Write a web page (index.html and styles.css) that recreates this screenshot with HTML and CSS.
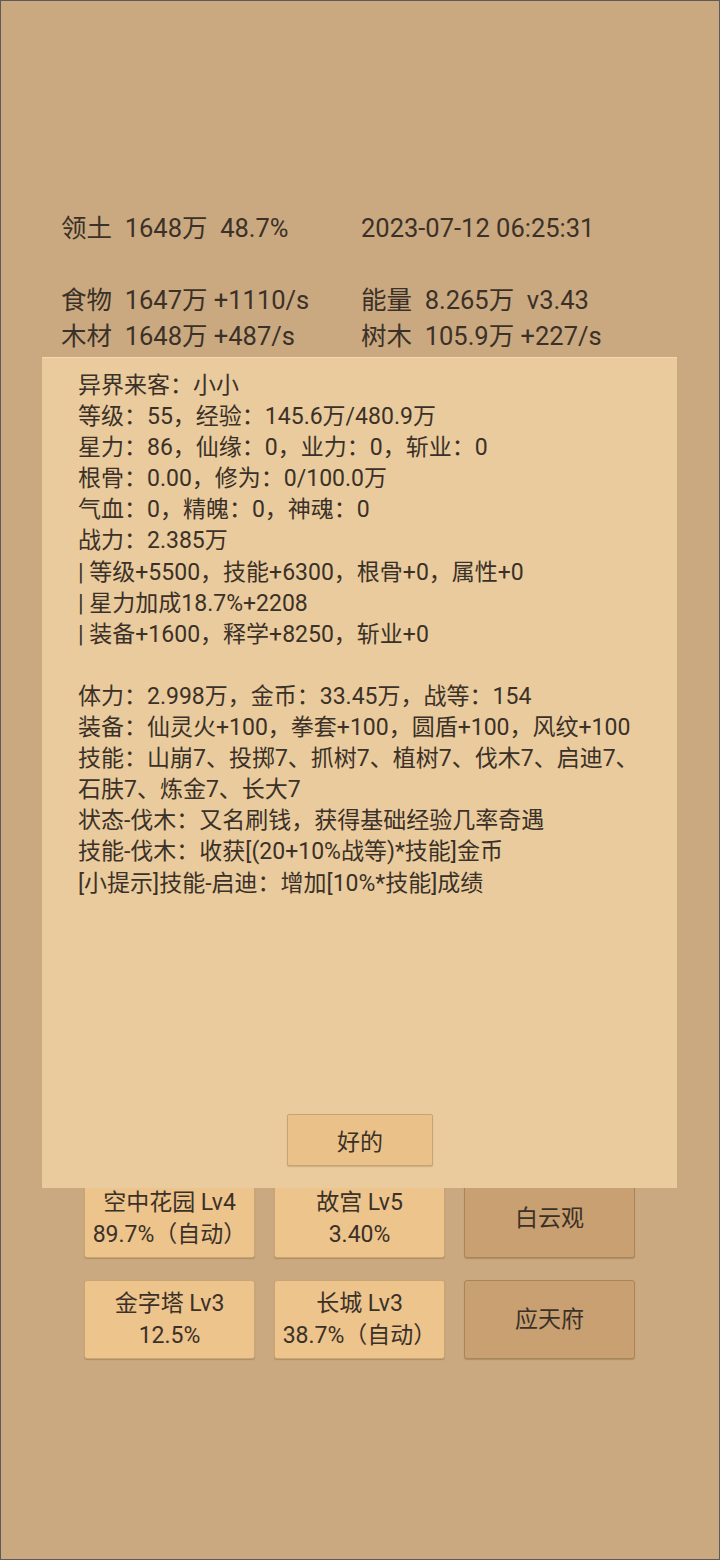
FILE: index.html
```html
<!DOCTYPE html>
<html lang="zh">
<head>
  <meta charset="UTF-8" />
  <meta name="viewport" content="width=device-width, initial-scale=1" />
  <title>领土</title>
  <link rel="stylesheet" href="styles.css">
</head>
<body>
  <div class="screen">
    <div class="stats">
      <div class="col">
        <div>领土  1648万  48.7%</div>
        <div>&nbsp;</div>
        <div>食物  1647万 +1110/s</div>
        <div>木材  1648万 +487/s</div>
      </div>
      <div class="col">
        <div>2023-07-12 06:25:31</div>
        <div>&nbsp;</div>
        <div>能量  8.265万  v3.43</div>
        <div>树木  105.9万 +227/s</div>
      </div>
    </div>

    <div class="buildings">
      <button class="bld">空中花园 Lv4<br>89.7%（自动）</button>
      <button class="bld">故宫 Lv5<br>3.40%</button>
      <button class="bld dark">白云观</button>
      <button class="bld">金字塔 Lv3<br>12.5%</button>
      <button class="bld">长城 Lv3<br>38.7%（自动）</button>
      <button class="bld dark">应天府</button>
    </div>

    <!-- 弹窗 -->
    <div class="dialog">
      <div class="info">异界来客：小小
等级：55，经验：145.6万/480.9万
星力：86，仙缘：0，业力：0，斩业：0
根骨：0.00，修为：0/100.0万
气血：0，精魄：0，神魂：0
战力：2.385万
| 等级+5500，技能+6300，根骨+0，属性+0
| 星力加成18.7%+2208
| 装备+1600，释学+8250，斩业+0

体力：2.998万，金币：33.45万，战等：154
装备：仙灵火+100，拳套+100，圆盾+100，风纹+100
技能：山崩7、投掷7、抓树7、植树7、伐木7、启迪7、
石肤7、炼金7、长大7
状态-伐木：又名刷钱，获得基础经验几率奇遇
技能-伐木：收获[(20+10%战等)*技能]金币
[小提示]技能-启迪：增加[10%*技能]成绩</div>
      <button class="ok">好的</button>
    </div>
  </div>
</body>
</html>
```

FILE: styles.css
```css
body { margin: 0; font-family: Roboto, "Noto Sans CJK SC", sans-serif; color: #3b3128; }
.screen { position: relative; width: 720px; height: 1560px; box-sizing: border-box; border: 1px solid #5e5a55; background: #caa980; overflow: hidden; }

.stats { display: grid; grid-template-columns: 300px 300px; padding: 209px 0 0 60px; font-size: 25.5px; line-height: 36px; }
.stats .col div { white-space: pre; }

.buildings { display: grid; grid-template-columns: repeat(3, 171px); column-gap: 19px; row-gap: 22px; margin: 825px 0 0 83px; }
.bld { height: 79px; padding: 0; font-family: inherit; font-size: 23px; line-height: 32px; color: #3b3128; background: #ecc48c; border: 1px solid #c9a576; border-radius: 3px; box-shadow: 0 1px 1px rgba(90,60,20,0.25); white-space: nowrap; }
.bld.dark { background: #c9a072; border-color: #a98659; }

.dialog { position: absolute; left: 41px; top: 356px; width: 635px; height: 831px; box-sizing: border-box; background: #e9cb9d; border-top: 1px solid #f2d9b0; padding: 12px 0 0 36px; }
.info { font-size: 23px; line-height: 31.1px; white-space: pre; }
.ok { position: absolute; left: 245px; bottom: 22px; width: 146px; height: 52px; font-family: inherit; font-size: 23px; color: #3b3128; background: #eac189; border: 1px solid #c9a374; border-radius: 2px; box-shadow: 0 1px 1px rgba(90,60,20,0.2); }
```
